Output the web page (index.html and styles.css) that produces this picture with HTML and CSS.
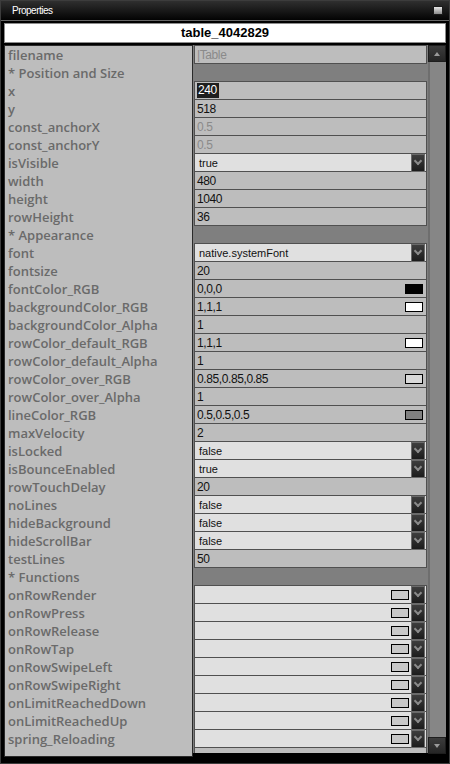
FILE: index.html
```html
<!DOCTYPE html>
<html lang="en">
<head>
  <meta charset="UTF-8">
  <title>Properties</title>
  <link rel="stylesheet" href="styles.css">
</head>
<body>
  <div class="window">
    <div class="titlebar">
      <span class="title">Properties</span>
      <span class="winbtn"></span>
    </div>
    <div class="frame">
      <div class="header">table_4042829</div>
      <div class="panel">
        <ul class="labels">
          <li>filename</li>
          <li>* Position and Size</li>
          <li>x</li>
          <li>y</li>
          <li>const_anchorX</li>
          <li>const_anchorY</li>
          <li>isVisible</li>
          <li>width</li>
          <li>height</li>
          <li>rowHeight</li>
          <li>* Appearance</li>
          <li>font</li>
          <li>fontsize</li>
          <li>fontColor_RGB</li>
          <li>backgroundColor_RGB</li>
          <li>backgroundColor_Alpha</li>
          <li>rowColor_default_RGB</li>
          <li>rowColor_default_Alpha</li>
          <li>rowColor_over_RGB</li>
          <li>rowColor_over_Alpha</li>
          <li>lineColor_RGB</li>
          <li>maxVelocity</li>
          <li>isLocked</li>
          <li>isBounceEnabled</li>
          <li>rowTouchDelay</li>
          <li>noLines</li>
          <li>hideBackground</li>
          <li>hideScrollBar</li>
          <li>testLines</li>
          <li>* Functions</li>
          <li>onRowRender</li>
          <li>onRowPress</li>
          <li>onRowRelease</li>
          <li>onRowTap</li>
          <li>onRowSwipeLeft</li>
          <li>onRowSwipeRight</li>
          <li>onLimitReachedDown</li>
          <li>onLimitReachedUp</li>
          <li>spring_Reloading</li>
        </ul>

        <div class="values">
          <div class="cell disabled">|Table</div>
          <div class="section"></div>
          <div class="cell"><span class="selected">240</span></div>
          <div class="cell">518</div>
          <div class="cell disabled">0.5</div>
          <div class="cell disabled">0.5</div>
          <div class="cell choice">true<span class="drop"></span></div>
          <div class="cell">480</div>
          <div class="cell">1040</div>
          <div class="cell">36</div>
          <div class="section"></div>
          <div class="cell choice">native.systemFont<span class="drop"></span></div>
          <div class="cell">20</div>
          <div class="cell">0,0,0<span class="swatch black"></span></div>
          <div class="cell">1,1,1<span class="swatch white"></span></div>
          <div class="cell">1</div>
          <div class="cell">1,1,1<span class="swatch white"></span></div>
          <div class="cell">1</div>
          <div class="cell">0.85,0.85,0.85<span class="swatch light"></span></div>
          <div class="cell">1</div>
          <div class="cell">0.5,0.5,0.5<span class="swatch mid"></span></div>
          <div class="cell">2</div>
          <div class="cell choice">false<span class="drop"></span></div>
          <div class="cell choice">true<span class="drop"></span></div>
          <div class="cell">20</div>
          <div class="cell choice">false<span class="drop"></span></div>
          <div class="cell choice">false<span class="drop"></span></div>
          <div class="cell choice">false<span class="drop"></span></div>
          <div class="cell">50</div>
          <div class="section"></div>
          <div class="cell fn"><span class="swatch"></span><span class="drop"></span></div>
          <div class="cell fn"><span class="swatch"></span><span class="drop"></span></div>
          <div class="cell fn"><span class="swatch"></span><span class="drop"></span></div>
          <div class="cell fn"><span class="swatch"></span><span class="drop"></span></div>
          <div class="cell fn"><span class="swatch"></span><span class="drop"></span></div>
          <div class="cell fn"><span class="swatch"></span><span class="drop"></span></div>
          <div class="cell fn"><span class="swatch"></span><span class="drop"></span></div>
          <div class="cell fn"><span class="swatch"></span><span class="drop"></span></div>
          <div class="cell fn"><span class="swatch"></span><span class="drop"></span></div>
          <div class="cell"></div>
        </div>

        <div class="scrollbar">
          <div class="scroll-btn"><span class="arrow-up"></span></div>
          <div class="track"></div>
          <div class="scroll-btn"><span class="arrow-down"></span></div>
        </div>
      </div>
    </div>
  </div>
</body>
</html>
```

FILE: styles.css
```css
body {
  margin: 0;
  background: #000;
  font-family: "Liberation Sans", Arial, sans-serif;
}

.window {
  width: 450px;
  height: 764px;
  box-sizing: border-box;
  border: 1px solid #3c3c3c;
  background: #000;
  overflow: hidden;
}

/* title bar */
.titlebar {
  height: 19px;
  display: flex;
  align-items: center;
  justify-content: space-between;
  padding: 0 6px 0 11px;
  background: linear-gradient(#2f2f2f, #030303);
  border-bottom: 1px solid #666;
}

.title {
  color: #fff;
  font-size: 10px;
  letter-spacing: -0.5px;
}

.winbtn {
  width: 8px;
  height: 7px;
  border: 1px solid #1a1a1a;
  background: linear-gradient(#e6e6e6, #8a8a8a);
}

.frame {
  padding: 2px 3px 0 3px;
}

.header {
  height: 18px;
  border: 1px solid #8c8c8c;
  background: #fff;
  text-align: center;
  font-weight: bold;
  font-size: 13px;
  line-height: 18px;
  color: #000;
}

.panel {
  display: flex;
  margin-top: 2px;
  height: 712px;
}

/* left column */
.labels {
  width: 189px;
  box-sizing: border-box;
  margin: 0;
  padding: 0 0 0 3px;
  list-style: none;
  background: #bdbdbd;
  border: 1px solid #2a2a2a;
}

.labels li {
  height: 18px;
  line-height: 18px;
  font-family: "Open Sans", "Liberation Sans", sans-serif;
  font-weight: 600;
  font-size: 13px;
  color: #6a6a6a;
  white-space: nowrap;
}

/* value column */
.values {
  width: 235px;
  height: 708px;
  box-sizing: border-box;
  padding: 0 1px;
  background: #7f7f7f;
  overflow: hidden;
}

.cell {
  height: 19px;
  box-sizing: border-box;
  margin-bottom: -1px;
  padding-left: 2px;
  display: flex;
  align-items: center;
  border: 1px solid #505050;
  background: #bdbdbd;
  font-size: 12px;
  letter-spacing: -0.4px;
  color: #111;
}

.section {
  height: 18px;
}

.cell.disabled {
  color: #8a8a8a;
}

.selected {
  background: #1e1e1e;
  color: #fff;
  padding: 0 2px 0 1px;
  line-height: 15px;
}

.cell.choice {
  background: #e0e0e0;
  padding-left: 4px;
  font-size: 11px;
  letter-spacing: 0;
}

.cell.fn {
  background: #e0e0e0;
}

.drop {
  width: 14px;
  height: 18px;
  box-sizing: border-box;
  margin: 0 1px 0 auto;
  display: flex;
  align-items: center;
  justify-content: center;
  border: 1px solid #6a6a6a;
  background: linear-gradient(#3e3e3e, #1c1c1c);
}

.drop::after {
  content: "";
  width: 4px;
  height: 4px;
  margin-top: -3px;
  border-right: 2px solid #8a8a8a;
  border-bottom: 2px solid #8a8a8a;
  transform: rotate(45deg);
}

.swatch {
  width: 16px;
  height: 8px;
  margin: 0 3px 0 auto;
  border: 1px solid #000;
  background: #c8c8c8;
}

.swatch.black { background: #000; }
.swatch.white { background: #fff; }
.swatch.light { background: #d9d9d9; }
.swatch.mid { background: #808080; }

.cell.fn .swatch {
  margin-right: 2px;
}

.cell.fn .drop {
  margin-left: 0;
}

/* scrollbar */
.scrollbar {
  width: 18px;
  height: 709px;
  display: flex;
  flex-direction: column;
}

.scroll-btn {
  height: 15px;
  display: flex;
  align-items: center;
  justify-content: center;
  background: linear-gradient(#3c3c3c, #262626);
  border: 1px solid #1e1e1e;
}

.track {
  flex: 1;
  background: #868686;
  border-left: 2px solid #6e6e6e;
}

.arrow-up {
  border-left: 3px solid transparent;
  border-right: 3px solid transparent;
  border-bottom: 4px solid #9a9a9a;
}

.arrow-down {
  border-left: 3px solid transparent;
  border-right: 3px solid transparent;
  border-top: 4px solid #9a9a9a;
}
```
